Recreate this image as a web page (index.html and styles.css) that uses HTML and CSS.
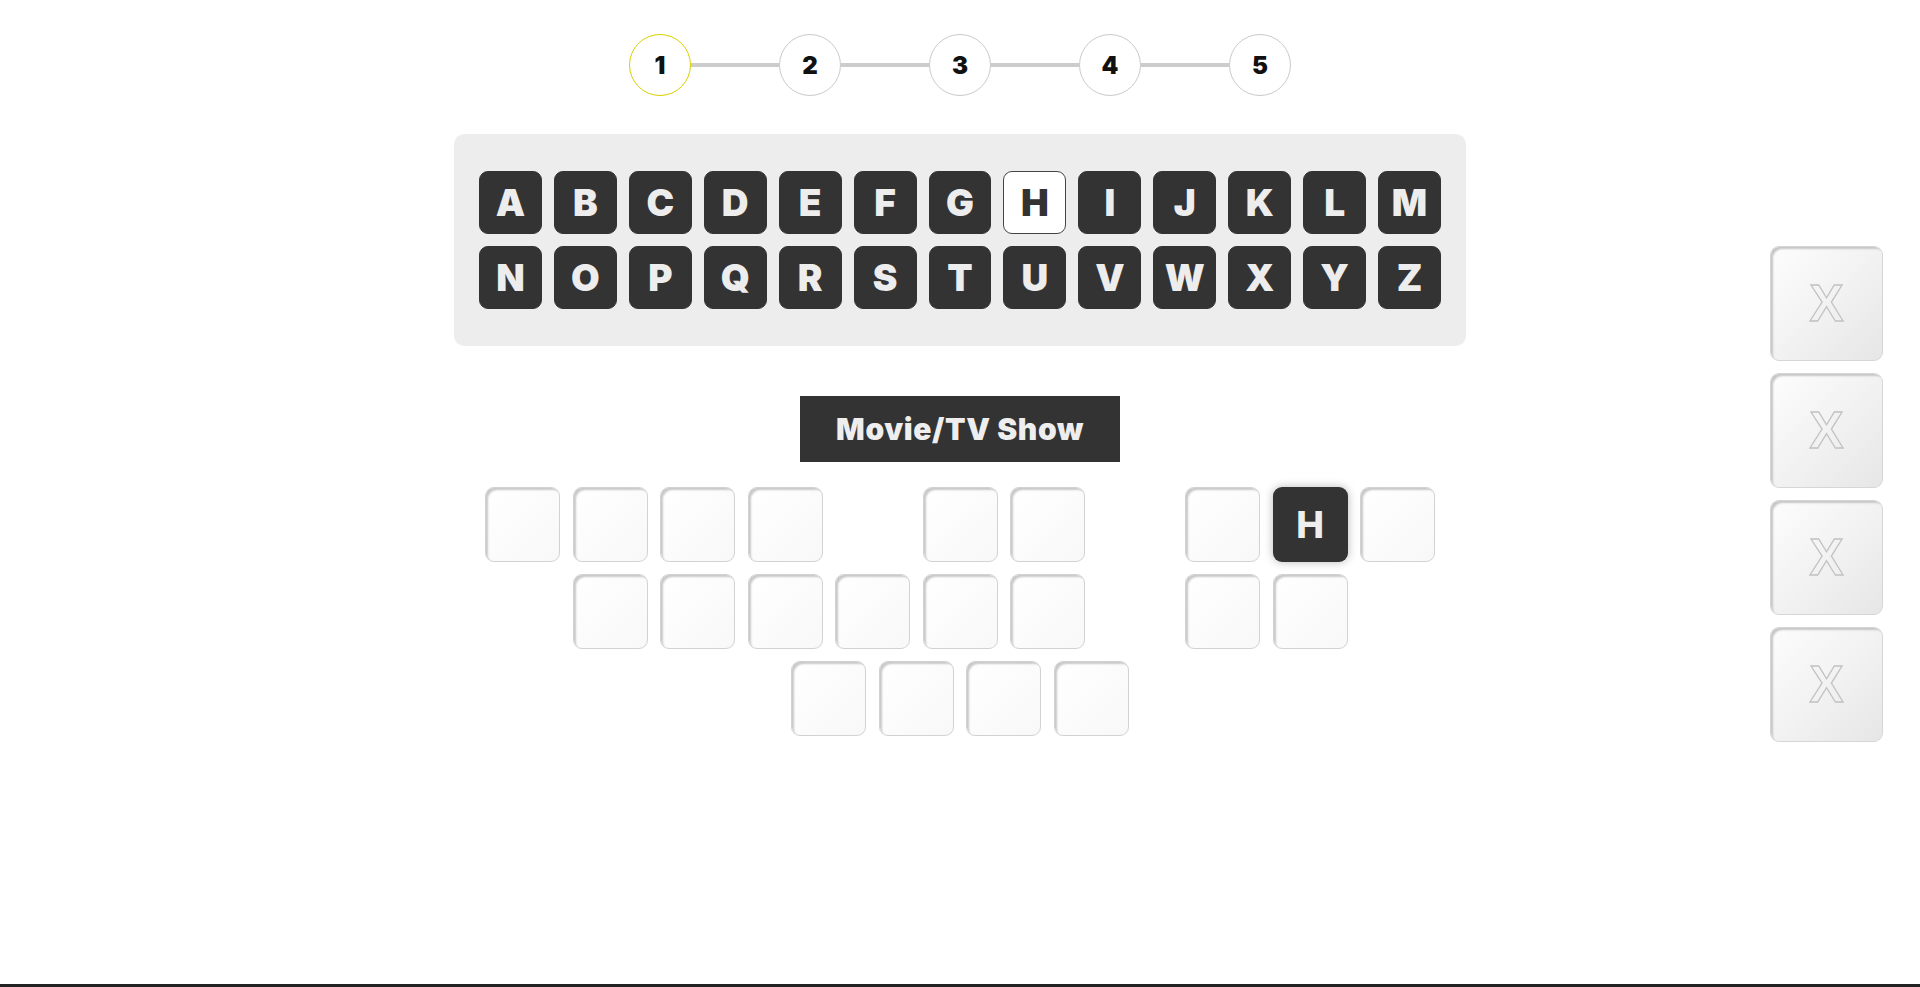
FILE: index.html
```html
<!DOCTYPE html>
<html lang="en">
<head>
<meta charset="utf-8">
<title>Guess the Phrase</title>
<link rel="stylesheet" href="styles.css">
</head>
<body>
<div class="page">
  <main class="game">
    <ol class="steps">
      <li class="step active">1</li>
      <li class="step-line"></li>
      <li class="step">2</li>
      <li class="step-line"></li>
      <li class="step">3</li>
      <li class="step-line"></li>
      <li class="step">4</li>
      <li class="step-line"></li>
      <li class="step">5</li>
    </ol>

    <section class="keyboard">
      <div class="key-row">
        <button class="key">A</button><button class="key">B</button><button class="key">C</button><button class="key">D</button><button class="key">E</button><button class="key">F</button><button class="key">G</button><button class="key used">H</button><button class="key">I</button><button class="key">J</button><button class="key">K</button><button class="key">L</button><button class="key">M</button>
      </div>
      <div class="key-row">
        <button class="key">N</button><button class="key">O</button><button class="key">P</button><button class="key">Q</button><button class="key">R</button><button class="key">S</button><button class="key">T</button><button class="key">U</button><button class="key">V</button><button class="key">W</button><button class="key">X</button><button class="key">Y</button><button class="key">Z</button>
      </div>
    </section>

    <div class="category">Movie/TV Show</div>

    <section class="board">
      <div class="line">
        <div class="word"><span class="tile"></span><span class="tile"></span><span class="tile"></span><span class="tile"></span></div>
        <div class="word"><span class="tile"></span><span class="tile"></span></div>
        <div class="word"><span class="tile"></span><span class="tile filled">H</span><span class="tile"></span></div>
      </div>
      <div class="line">
        <div class="word"><span class="tile"></span><span class="tile"></span><span class="tile"></span><span class="tile"></span><span class="tile"></span><span class="tile"></span></div>
        <div class="word"><span class="tile"></span><span class="tile"></span></div>
      </div>
      <div class="line">
        <div class="word"><span class="tile"></span><span class="tile"></span><span class="tile"></span><span class="tile"></span></div>
      </div>
    </section>
  </main>

  <aside class="strikes">
    <div class="strike">X</div>
    <div class="strike">X</div>
    <div class="strike">X</div>
    <div class="strike">X</div>
  </aside>

  <footer class="footer-bar"></footer>
</div>
</body>
</html>
```

FILE: styles.css
```css
* { box-sizing: border-box; }

html, body {
  margin: 0;
  padding: 0;
  background: #fff;
  font-family: Inter, "Liberation Sans", sans-serif;
}

.page {
  min-height: 100vh;
  display: flex;
  flex-direction: column;
}

.game {
  flex: 1;
  display: flex;
  flex-direction: column;
  align-items: center;
  padding-top: 34px;
}

/* steps */
.steps {
  list-style: none;
  margin: 0;
  padding: 0;
  display: flex;
  align-items: center;
}

.step {
  width: 62px;
  height: 62px;
  border-radius: 50%;
  border: 1.5px solid #cacaca;
  display: flex;
  align-items: center;
  justify-content: center;
  font-size: 24px;
  font-weight: 900;
  color: #111;
  background: #fff;
}

.step.active {
  border-color: #d9d000;
}

.step-line {
  width: 88px;
  height: 4px;
  background: #cccccc;
}

/* keyboard */
.keyboard {
  margin-top: 38px;
  width: 1012px;
  background: #ededed;
  border-radius: 10px;
  padding: 37px 25px;
  display: flex;
  flex-direction: column;
  gap: 12px;
}

.key-row {
  display: flex;
  gap: 12px;
}

.key {
  width: 63px;
  height: 63px;
  margin: 0;
  padding: 0;
  border: 1px solid #333;
  border-radius: 9px;
  background: #333;
  color: #ededed;
  font-family: Inter, "Liberation Sans", sans-serif;
  font-size: 37px;
  font-weight: 900;
  display: flex;
  align-items: center;
  justify-content: center;
  cursor: pointer;
}

.key.used {
  background: #fff;
  color: #333;
  border-color: #444;
}

/* category */
.category {
  margin-top: 50px;
  width: 320px;
  height: 66px;
  background: #333;
  color: #eee;
  font-size: 30px;
  font-weight: 900;
  letter-spacing: 0.6px;
  display: flex;
  align-items: center;
  justify-content: center;
}

/* board */
.board {
  margin-top: 25px;
  display: flex;
  flex-direction: column;
  align-items: center;
  gap: 12px;
}

.line {
  display: flex;
  gap: 100px;
}

.word {
  display: flex;
  gap: 12.5px;
}

.tile {
  width: 75px;
  height: 75px;
  border-radius: 9px;
  border: 1px solid #d2d2d2;
  background: linear-gradient(135deg, #ffffff 0%, #f8f8f8 100%);
  box-shadow: inset 3px 3px 2px -1px #c9c9c9;
  display: flex;
  align-items: center;
  justify-content: center;
}

.tile.filled {
  border: none;
  background: #333;
  color: #eee;
  font-size: 37px;
  font-weight: 800;
  box-shadow: 0 0 10px rgba(0, 0, 0, 0.28);
}

/* strikes */
.strikes {
  position: fixed;
  right: 37px;
  top: 50%;
  transform: translateY(-50%);
  display: flex;
  flex-direction: column;
  gap: 12px;
}

.strike {
  width: 113px;
  height: 115px;
  border-radius: 9px;
  border: 1px solid #d6d6d6;
  background: linear-gradient(135deg, #fdfdfd 0%, #f1f1f1 55%, #e6e6e6 100%);
  box-shadow: inset 3px 3px 2px -1px #c6c6c6;
  display: flex;
  align-items: center;
  justify-content: center;
  font-family: "Liberation Sans", Arial, sans-serif;
  font-size: 51px;
  font-weight: 700;
  color: transparent;
  -webkit-text-stroke: 1.3px #c2c2c2;
}

.footer-bar {
  height: 3px;
  background: #222;
}
```
